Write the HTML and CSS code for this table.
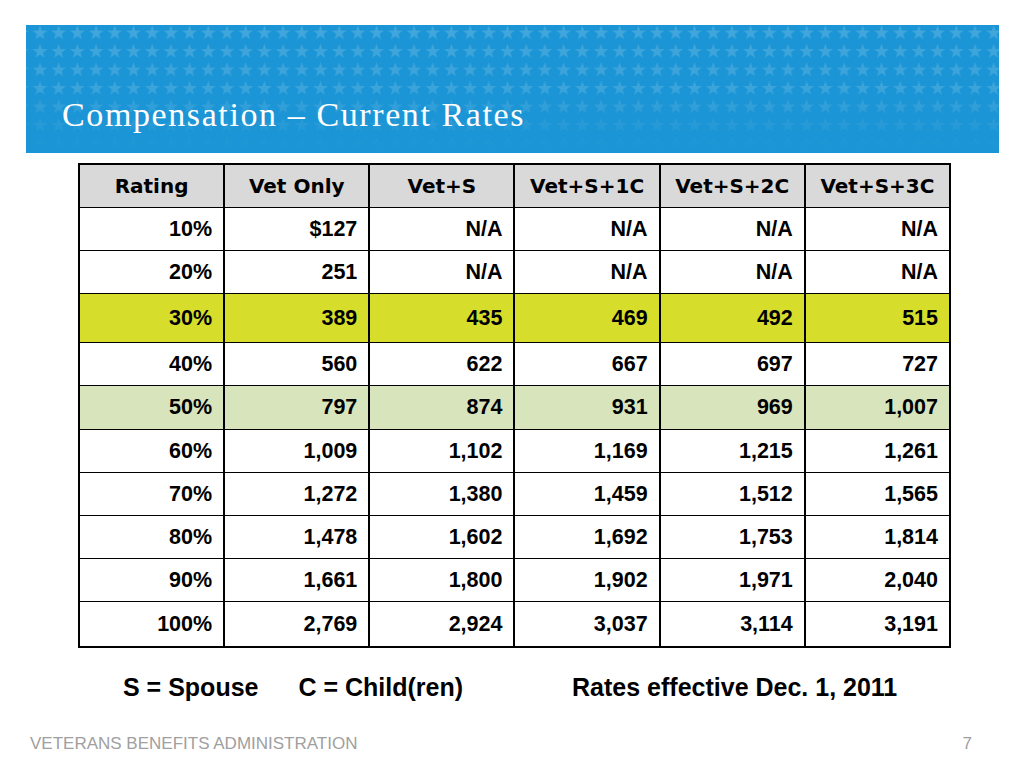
FILE: index.html
```html
<!DOCTYPE html>
<html>
<head>
<meta charset="utf-8">
<link rel="stylesheet" href="styles.css">
</head>
<body>
<div class="slide">
  <div class="banner">
    <svg class="stars" width="973" height="128" viewBox="0 0 973 128" aria-hidden="true">
      <defs>
        <pattern id="star" x="4.65" y="-1.25" width="18.7" height="18.5" patternUnits="userSpaceOnUse">
          <path transform="translate(9.35 9.25) scale(1.12)" d="M0,-7 L1.646,-2.265 L6.657,-2.163 L2.663,0.865 L4.114,5.663 L0,2.8 L-4.114,5.663 L-2.663,0.865 L-6.657,-2.163 L-1.646,-2.265 Z" fill="#ffffff"/>
        </pattern>
        <linearGradient id="fade" x1="0" y1="0" x2="0" y2="1">
          <stop offset="0" stop-color="#fff" stop-opacity="0.17"/>
          <stop offset="0.5" stop-color="#fff" stop-opacity="0.14"/>
          <stop offset="0.8" stop-color="#fff" stop-opacity="0.05"/>
          <stop offset="1" stop-color="#fff" stop-opacity="0"/>
        </linearGradient>
        <mask id="m">
          <rect width="973" height="128" fill="url(#fade)"/>
        </mask>
      </defs>
      <rect width="973" height="128" fill="url(#star)" mask="url(#m)"/>
    </svg>
    <h1 class="title">Compensation – Current Rates</h1>
  </div>

  <table class="rates">
    <thead>
      <tr class="head"><th>Rating</th><th>Vet Only</th><th>Vet+S</th><th>Vet+S+1C</th><th>Vet+S+2C</th><th>Vet+S+3C</th></tr>
    </thead>
    <tbody>
      <tr class="r43"><td>10%</td><td>$127</td><td>N/A</td><td>N/A</td><td>N/A</td><td>N/A</td></tr>
      <tr class="r43"><td>20%</td><td>251</td><td>N/A</td><td>N/A</td><td>N/A</td><td>N/A</td></tr>
      <tr class="r49 yellow"><td>30%</td><td>389</td><td>435</td><td>469</td><td>492</td><td>515</td></tr>
      <tr class="r43"><td>40%</td><td>560</td><td>622</td><td>667</td><td>697</td><td>727</td></tr>
      <tr class="r44 green"><td>50%</td><td>797</td><td>874</td><td>931</td><td>969</td><td>1,007</td></tr>
      <tr class="r43"><td>60%</td><td>1,009</td><td>1,102</td><td>1,169</td><td>1,215</td><td>1,261</td></tr>
      <tr class="r43"><td>70%</td><td>1,272</td><td>1,380</td><td>1,459</td><td>1,512</td><td>1,565</td></tr>
      <tr class="r43"><td>80%</td><td>1,478</td><td>1,602</td><td>1,692</td><td>1,753</td><td>1,814</td></tr>
      <tr class="r43"><td>90%</td><td>1,661</td><td>1,800</td><td>1,902</td><td>1,971</td><td>2,040</td></tr>
      <tr class="r45"><td>100%</td><td>2,769</td><td>2,924</td><td>3,037</td><td>3,114</td><td>3,191</td></tr>
    </tbody>
  </table>

  <div class="legend">
    <span class="l1">S = Spouse</span>
    <span class="l2">C = Child(ren)</span>
    <span class="l3">Rates effective Dec. 1, 2011</span>
  </div>

  <div class="footer">
    <span class="org">VETERANS BENEFITS ADMINISTRATION</span>
    <span class="page">7</span>
  </div>
</div>
</body>
</html>
```

FILE: styles.css
```css
html, body {
  margin: 0;
  padding: 0;
  background: #ffffff;
}

.slide {
  width: 1024px;
  height: 768px;
  overflow: hidden;
  background: #ffffff;
  padding-top: 25px;
  box-sizing: border-box;
}

.banner {
  position: relative;
  margin-left: 26px;
  width: 973px;
  height: 128px;
  background: #1b95d5;
  box-sizing: border-box;
  padding: 73px 0 0 36px;
}

.stars {
  position: absolute;
  left: 0;
  top: 0;
}

.title {
  position: relative;
  margin: 0;
  font-family: "Liberation Serif", "Times New Roman", serif;
  font-weight: normal;
  font-size: 34px;
  line-height: 34px;
  letter-spacing: 1.6px;
  color: #ffffff;
  white-space: nowrap;
}

.rates {
  margin: 10px 0 0 78px;
  width: 873px;
  table-layout: fixed;
  border-collapse: collapse;
  border: 2px solid #000000;
}

.rates th,
.rates td {
  border-left: 2px solid #000000;
  border-right: 2px solid #000000;
  border-top: 1px solid #000000;
  border-bottom: 1px solid #000000;
  padding: 0 11px 0 0;
  vertical-align: middle;
}

.rates th {
  background: #d9d9d9;
  font-family: "DejaVu Sans", Verdana, sans-serif;
  font-weight: bold;
  font-size: 20px;
  color: #000000;
  text-align: center;
  padding: 0;
  height: 42px;
  border-bottom: 1px solid #000000;
}

.rates td {
  font-family: "Liberation Sans", Arial, sans-serif;
  font-weight: bold;
  font-size: 21.5px;
  color: #000000;
  text-align: right;
  background: #ffffff;
}

.r43 td { height: 42px; }
.r44 td { height: 43px; }
.r45 td { height: 44px; }
.r49 td { height: 48px; }

.yellow td { background: #d6de2b; }
.green td { background: #d8e4bc; }

.legend {
  display: flex;
  margin-top: 27px;
  padding-left: 123px;
  font-family: "Liberation Sans", Arial, sans-serif;
  font-weight: bold;
  font-size: 25px;
  line-height: 25px;
  color: #000000;
  white-space: nowrap;
}

.l2 { margin-left: 40px; }
.l3 { margin-left: 109px; }

.footer {
  display: flex;
  justify-content: space-between;
  align-items: baseline;
  margin-top: 34px;
  padding: 0 52px 0 30px;
  font-family: "Liberation Sans", Arial, sans-serif;
  color: #a0a0a0;
  line-height: 19px;
}

.org { font-size: 17px; }
.page { font-size: 17px; }
```
